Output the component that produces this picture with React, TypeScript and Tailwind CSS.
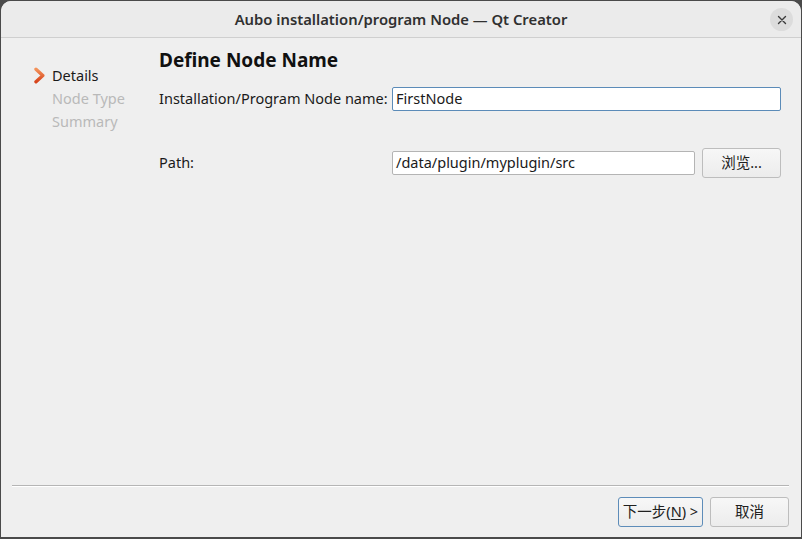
import React from 'react'

const ui = { fontFamily: '"Noto Sans", "Noto Sans CJK SC", sans-serif' }
const cjk = { fontFamily: '"Noto Sans", "Noto Sans CJK SC", sans-serif' }

function Chevron() {
  return (
    <svg width="13" height="17" viewBox="0 0 13 17" className="shrink-0">
      <defs>
        <linearGradient id="chev" x1="0" y1="0" x2="0" y2="1">
          <stop offset="0" stopColor="#f3925a" />
          <stop offset="1" stopColor="#d6431b" />
        </linearGradient>
      </defs>
      <path d="M3 2.2 L9.8 8.5 L3 14.8" fill="none" stroke="url(#chev)" strokeWidth="3.4" strokeLinecap="round" strokeLinejoin="round" />
    </svg>
  )
}

function Button({ children, primary }: { children: React.ReactNode; primary?: boolean }) {
  return (
    <button
      type="button"
      className={
        primary
          ? 'flex h-[30px] w-[85px] items-center justify-center rounded-[3px] border border-[#5d8cb9] bg-gradient-to-b from-[#f7f7f7] to-[#ececec] text-[14.5px] text-[#202020]'
          : 'flex h-[30px] w-[79px] items-center justify-center rounded-[3px] border border-[#bdbdbd] bg-gradient-to-b from-[#f7f7f7] to-[#ececec] text-[14.5px] text-[#202020]'
      }
      style={cjk}
    >
      {children}
    </button>
  )
}

function Field({ value, focused, width }: { value: string; focused?: boolean; width: string }) {
  return (
    <div
      className={
        'flex h-[24px] items-center rounded-[2px] border bg-white pl-[3px] text-[14.5px] text-[#1a1a1a] ' +
        (focused ? 'border-[#5b8bb8] ' : 'border-[#b4b4b4] ') +
        width
      }
    >
      {value}
    </div>
  )
}

export default function App() {
  return (
    <div className="h-[539px] w-[802px] overflow-hidden bg-[#4a4a4a] pl-px pt-px" style={ui}>
      <div className="flex h-[536px] w-[800px] flex-col overflow-hidden rounded-t-[10px] bg-[#efefef]">
        {/* title bar */}
        <div className="relative flex h-[37px] shrink-0 items-center justify-center border-b border-[#cfcfcf] bg-[#ebebeb]">
          <span className="text-[14.8px] font-semibold text-[#303030]">Aubo installation/program Node — Qt Creator</span>
          <div className="absolute right-[8px] top-[7px] flex h-[23px] w-[23px] items-center justify-center rounded-full bg-[#dcdcdc]">
            <svg width="10" height="10" viewBox="0 0 10 10">
              <path d="M1.5 1.5 L8.5 8.5 M8.5 1.5 L1.5 8.5" stroke="#3a3a3a" strokeWidth="1.4" strokeLinecap="round" />
            </svg>
          </div>
        </div>

        {/* body */}
        <div className="flex flex-1">
          <div className="w-[158px] shrink-0 pl-[32px] pt-[26px] text-[14.5px]">
            <div className="flex h-[23px] items-center gap-[6px]">
              <Chevron />
              <span className="text-[#1a1a1a]">Details</span>
            </div>
            <div className="flex h-[23px] items-center pl-[19px] text-[#b9b9b9]">Node Type</div>
            <div className="flex h-[23px] items-center pl-[19px] text-[#b9b9b9]">Summary</div>
          </div>

          <div className="flex-1 pr-[20px] pt-[10px]">
            <h1 className="h-[24px] text-[19px] font-bold leading-[24px] text-[#111]">Define Node Name</h1>
            <div className="mt-[15px] flex items-center">
              <span className="w-[233px] text-[14.5px] text-[#1a1a1a]">Installation/Program Node name:</span>
              <Field value="FirstNode" focused width="flex-1" />
            </div>
            <div className="mt-[37px] flex items-center">
              <span className="w-[233px] text-[14.5px] text-[#1a1a1a]">Path:</span>
              <Field value="/data/plugin/myplugin/src" width="w-[303px]" />
              <div className="ml-auto">
                <Button>浏览...</Button>
              </div>
            </div>
          </div>
        </div>

        {/* footer */}
        <div className="shrink-0 pb-[10px]">
          <div className="ml-[11px] mr-[12px] border-b border-t border-b-white border-t-[#b5b5b5]" />
          <div className="mt-[10px] flex justify-end gap-[7px] pr-[12px]">
            <Button primary>
              下一步(<span className="underline underline-offset-2">N</span>) &gt;
            </Button>
            <Button>取消</Button>
          </div>
        </div>
      </div>
    </div>
  )
}
